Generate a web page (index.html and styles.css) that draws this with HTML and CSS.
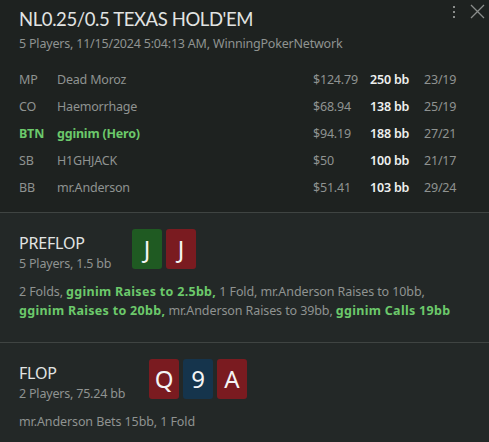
FILE: index.html
```html
<!DOCTYPE html>
<html>
<head>
<meta charset="utf-8">
<link rel="stylesheet" href="styles.css">
</head>
<body>
<div class="panel">
  <section class="header">
    <div class="icons">
      <svg class="dots" width="4" height="14" viewBox="0 0 4 14"><rect x="1" y="1" width="2" height="2" fill="#8a8d8b"/><rect x="1" y="6" width="2" height="2" fill="#8a8d8b"/><rect x="1" y="11" width="2" height="2" fill="#8a8d8b"/></svg>
      <svg class="close" width="15" height="15" viewBox="0 0 15 15"><path d="M1 1 L14 14 M14 1 L1 14" stroke="#8a8d8b" stroke-width="1.3"/></svg>
    </div>
    <h1 class="title">NL0.25/0.5 TEXAS HOLD'EM</h1>
    <div class="sub">5 Players, 11/15/2024 5:04:13 AM, WinningPokerNetwork</div>
    <div class="players">
      <div class="row"><span class="pos">MP</span><span class="name">Dead Moroz</span><span class="money">$124.79</span><span class="bb">250 bb</span><span class="stat">23/19</span></div>
      <div class="row"><span class="pos">CO</span><span class="name">Haemorrhage</span><span class="money">$68.94</span><span class="bb">138 bb</span><span class="stat">25/19</span></div>
      <div class="row hero"><span class="pos">BTN</span><span class="name">gginim (Hero)</span><span class="money">$94.19</span><span class="bb">188 bb</span><span class="stat">27/21</span></div>
      <div class="row"><span class="pos">SB</span><span class="name">H1GHJACK</span><span class="money">$50</span><span class="bb">100 bb</span><span class="stat">21/17</span></div>
      <div class="row"><span class="pos">BB</span><span class="name">mr.Anderson</span><span class="money">$51.41</span><span class="bb">103 bb</span><span class="stat">29/24</span></div>
    </div>
  </section>
  <section class="street">
    <div class="street-head">
      <div class="street-info">
        <div class="street-name">PREFLOP</div>
        <div class="street-sub">5 Players, 1.5 bb</div>
      </div>
      <div class="cards">
        <span class="card green">J</span><span class="card red">J</span>
      </div>
    </div>
    <p class="actions">2 Folds, <b>gginim Raises to 2.5bb,</b> 1 Fold, mr.Anderson Raises to 10bb, <b>gginim Raises to 20bb,</b> mr.Anderson Raises to 39bb, <b>gginim Calls 19bb</b></p>
  </section>
  <section class="street">
    <div class="street-head">
      <div class="street-info">
        <div class="street-name">FLOP</div>
        <div class="street-sub">2 Players, 75.24 bb</div>
      </div>
      <div class="cards flop">
        <span class="card red">Q</span><span class="card blue">9</span><span class="card red">A</span>
      </div>
    </div>
    <p class="actions">mr.Anderson Bets 15bb, 1 Fold</p>
  </section>
</div>
</body>
</html>
```
FILE: styles.css
```css
html, body {
  margin: 0;
  padding: 0;
  background: #232827;
}
body {
  font-family: "Noto Sans", "Open Sans", sans-serif;
  color: #9a9d9b;
  width: 489px;
  height: 442px;
  overflow: hidden;
}
.panel {
  display: flex;
  flex-direction: column;
}
.header {
  position: relative;
  background: #1e2220;
  padding: 8px 0 0 19px;
  height: 204px;
  border-bottom: 1px solid #3f4442;
}
.icons {
  position: absolute;
  top: 4px;
  right: 4px;
  display: flex;
  align-items: center;
  gap: 14px;
}
.dots { display: block; margin-top: 1px; }
.close { display: block; }
.title {
  margin: 0;
  font-family: "Lato", "Noto Sans", sans-serif;
  font-size: 18.5px;
  font-weight: 400;
  color: #e2e4e3;
  line-height: 22px;
  letter-spacing: -0.4px;
}
.sub {
  font-size: 12.5px;
  margin-top: 5px;
  line-height: 18px;
  color: #8f9391;
  letter-spacing: -0.2px;
}
.players {
  margin-top: 18px;
  display: flex;
  flex-direction: column;
  gap: 9px;
}
.row {
  display: flex;
  font-size: 12.5px;
  line-height: 18px;
  color: #8f9391;
  letter-spacing: -0.2px;
}
.pos { width: 38px; }
.name { width: 256px; }
.money { width: 57px; }
.bb { width: 54px; color: #eef0ef; font-weight: 600; }
.stat { color: #8f9391; }
.hero .pos, .hero .name { color: #6cc96b; font-weight: 700; }
.street {
  padding: 16px 0 0 19px;
  border-bottom: 1px solid #3f4442;
  height: 113px;
}
.street + .street {
  height: auto;
  border-bottom: none;
}
.street-head {
  display: flex;
  align-items: flex-start;
}
.street-info {
  width: 113px;
  padding-top: 4px;
}
.street-name {
  font-size: 16px;
  color: #e2e4e3;
  line-height: 20px;
  letter-spacing: -0.2px;
}
.street-sub {
  font-size: 12.5px;
  color: #8f9391;
  margin-top: 2px;
  line-height: 17px;
  letter-spacing: -0.2px;
}
.cards {
  display: flex;
  gap: 4px;
}
.flop { margin-left: 17px; }
.card {
  width: 30px;
  height: 40px;
  border-radius: 3px;
  display: flex;
  align-items: center;
  justify-content: center;
  color: #f4f4f4;
  font-size: 24px;
  line-height: 1;
}
.green { background: #1f5a22; }
.red { background: #7a1b20; }
.blue { background: #15344c; }
.actions {
  margin: 10px 0 0 0;
  max-width: 436px;
  font-size: 12.5px;
  line-height: 19px;
  color: #8f9391;
  letter-spacing: -0.1px;
}
.actions b { color: #6cc96b; font-weight: 700; letter-spacing: 0.3px; }
```
